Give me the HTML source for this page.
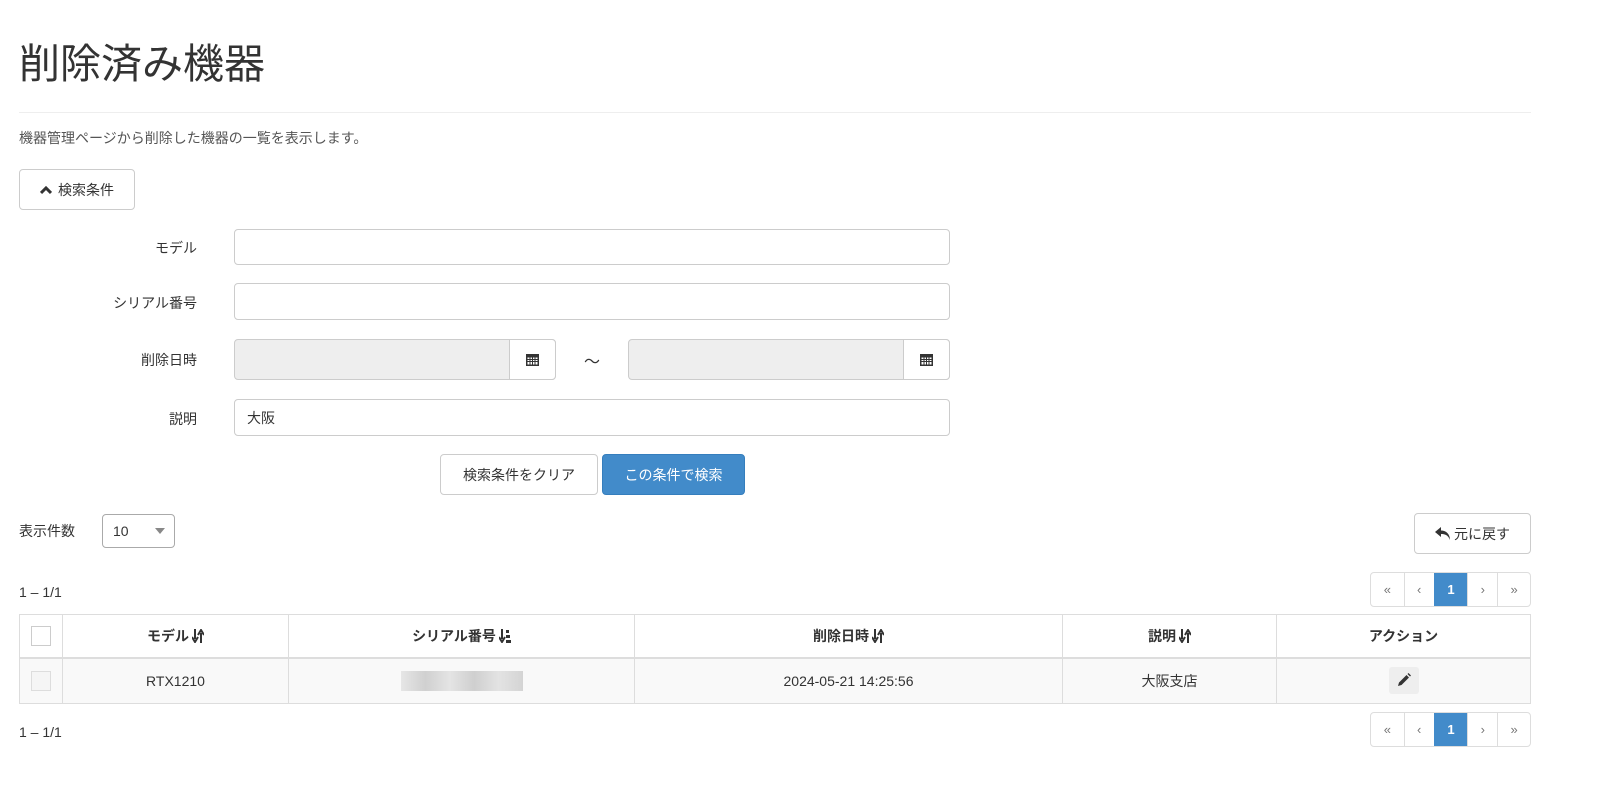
<!DOCTYPE html>
<html><head><meta charset="utf-8"><style>
*{box-sizing:border-box;margin:0;padding:0}
body{width:1604px;height:794px;background:#fff;font-family:"Liberation Sans","Noto Sans CJK JP",sans-serif;color:#333;font-size:14px;position:relative;overflow:hidden}
.a{position:absolute}
h1{position:absolute;left:19px;top:38px;font-size:41px;font-weight:400;line-height:52px;color:#333}
.hr{left:19px;width:1512px;top:112px;border-top:1px solid #eee}
.btn{position:absolute;border:1px solid #ccc;border-radius:4px;background:#fff;display:flex;align-items:center;justify-content:center;font-size:14px;color:#333}
.lbl{position:absolute;right:1407px;font-size:14px;text-align:right}
.inp{position:absolute;border:1px solid #ccc;border-radius:4px;background:#fff;left:234px;width:716px}
.gr{background:#eee}
.pg{position:absolute;left:1370px;width:161px;height:35px;border:1px solid #ddd;border-radius:4px;display:flex;overflow:hidden}
.pg div{border-left:1px solid #ddd;display:flex;align-items:center;justify-content:center;color:#777;font-size:13px}
.pg div:first-child{border-left:0}
.pg .on{background:#428bca;color:#fff;font-weight:bold;border-color:#428bca}
table{position:absolute;left:19px;top:614px;width:1512px;border-collapse:collapse}
td,th{border:1px solid #ddd;text-align:center;font-size:14px}
th{height:43px;border-bottom:2px solid #ddd;font-weight:bold}
td{height:46px;background:#f9f9f9}
.cb{display:inline-block;width:20px;height:20px;border:1px solid #ccc;background:#fff;vertical-align:middle}
.si{vertical-align:-2px;margin-left:3px}
</style></head><body>
<h1>削除済み機器</h1>
<div class="a hr"></div>
<div class="a" style="left:19px;top:128px;color:#555">機器管理ページから削除した機器の一覧を表示します。</div>
<div class="btn" style="left:19px;top:169px;width:116px;height:41px"><svg width="12" height="10" viewBox="0 0 12 10" style="margin-right:6px"><path d="M1 8 L6 3 L11 8" stroke="#333" stroke-width="3" fill="none"/></svg>検索条件</div>
<div class="lbl" style="top:238px">モデル</div>
<div class="inp" style="top:229px;height:36px"></div>
<div class="lbl" style="top:293px">シリアル番号</div>
<div class="inp" style="top:283px;height:37px"></div>
<div class="lbl" style="top:350px">削除日時</div>
<div class="inp gr" style="top:339px;height:41px;width:322px"></div>
<div class="a" style="left:509px;top:339px;width:47px;height:41px;border:1px solid #ccc;border-radius:0 4px 4px 0;background:#fff;display:flex;align-items:center;justify-content:center"><svg width="13" height="13" viewBox="0 0 13 13"><rect x="0" y="1" width="13" height="12" fill="#333"/><rect x="1.5" y="4.5" width="10" height="7" fill="#fff"/><path d="M1.5 6.5h10M1.5 8.5h10M4 4.5v7M6.5 4.5v7M9 4.5v7" stroke="#333"/></svg></div>
<div class="a" style="left:584px;top:348px;font-size:16px">～</div>
<div class="inp gr" style="top:339px;height:41px;width:322px;left:628px"></div>
<div class="a" style="left:903px;top:339px;width:47px;height:41px;border:1px solid #ccc;border-radius:0 4px 4px 0;background:#fff;display:flex;align-items:center;justify-content:center"><svg width="13" height="13" viewBox="0 0 13 13"><rect x="0" y="1" width="13" height="12" fill="#333"/><rect x="1.5" y="4.5" width="10" height="7" fill="#fff"/><path d="M1.5 6.5h10M1.5 8.5h10M4 4.5v7M6.5 4.5v7M9 4.5v7" stroke="#333"/></svg></div>
<div class="lbl" style="top:409px">説明</div>
<div class="inp" style="top:399px;height:37px;padding:8px 12px">大阪</div>
<div class="btn" style="left:440px;top:454px;width:158px;height:41px">検索条件をクリア</div>
<div class="btn" style="left:602px;top:454px;width:143px;height:41px;background:#428bca;border-color:#357ebd;color:#fff">この条件で検索</div>
<div class="a" style="left:19px;top:521px">表示件数</div>
<div class="a" style="left:102px;top:514px;width:73px;height:34px;border:1px solid #aaa;border-radius:4px;padding:8px 10px">10<span style="position:absolute;right:9px;top:13px;border-left:5px solid transparent;border-right:5px solid transparent;border-top:6px solid #888"></span></div>
<div class="btn" style="left:1414px;top:513px;width:117px;height:41px"><svg width="16" height="14" viewBox="0 0 16 14" style="margin-right:3px"><path d="M6 0 L0 5 L6 10 V7 C10 7 13 8 15 13 C15 7 11 3.5 6 3.5Z" fill="#333"/></svg>元に戻す</div>
<div class="a" style="left:19px;top:584px">1 – 1/1</div>
<div class="pg" style="top:572px"><div style="width:33px">«</div><div style="width:30px">‹</div><div class="on" style="width:34px">1</div><div style="width:30px">›</div><div style="width:33px">»</div></div>
<table>
<tr><th style="width:43px"><span class="cb"></span></th>
<th style="width:226px">モデル<svg class="si" width="12" height="14" viewBox="0 0 12 14"><path d="M3 0v10M0 8l3 5 3-5M9 14V4M6 6l3-5 3 5" stroke="#333" stroke-width="2" fill="none"/></svg></th>
<th style="width:346px">シリアル番号<svg class="si" width="12" height="14" viewBox="0 0 12 14"><path d="M3 0v10M0 8l3 5 3-5" stroke="#333" stroke-width="2" fill="none"/><path d="M7 1h3v3H7zM7 6h4v3H7zM7 11h5v3H7z" fill="#333"/></svg></th>
<th style="width:428px">削除日時<svg class="si" width="12" height="14" viewBox="0 0 12 14"><path d="M3 0v10M0 8l3 5 3-5M9 14V4M6 6l3-5 3 5" stroke="#333" stroke-width="2" fill="none"/></svg></th>
<th style="width:214px">説明<svg class="si" width="12" height="14" viewBox="0 0 12 14"><path d="M3 0v10M0 8l3 5 3-5M9 14V4M6 6l3-5 3 5" stroke="#333" stroke-width="2" fill="none"/></svg></th>
<th>アクション</th></tr>
<tr><td><span class="cb" style="background:#f5f5f5;border-color:#ddd"></span></td><td>RTX1210</td><td><span style="display:inline-block;width:122px;height:20px;background:linear-gradient(90deg,#e6e6e6,#d0d0d0 20%,#e4e4e4 40%,#cfcfcf 60%,#e3e3e3 80%,#d4d4d4);vertical-align:middle"></span></td><td>2024-05-21 14:25:56</td><td>大阪支店</td><td><span style="display:inline-block;width:30px;height:27px;background:#eee;border-radius:3px;vertical-align:middle;padding-top:6px"><svg width="14" height="14" viewBox="0 0 14 14"><path d="M1 13 L2 9.5 L9.5 2 L12 4.5 L4.5 12Z M10.5 1 L11.5 0 L14 2.5 L13 3.5Z" fill="#333"/></svg></span></td></tr>
</table>
<div class="a" style="left:19px;top:724px">1 – 1/1</div>
<div class="pg" style="top:712px"><div style="width:33px">«</div><div style="width:30px">‹</div><div class="on" style="width:34px">1</div><div style="width:30px">›</div><div style="width:33px">»</div></div>
</body></html>
